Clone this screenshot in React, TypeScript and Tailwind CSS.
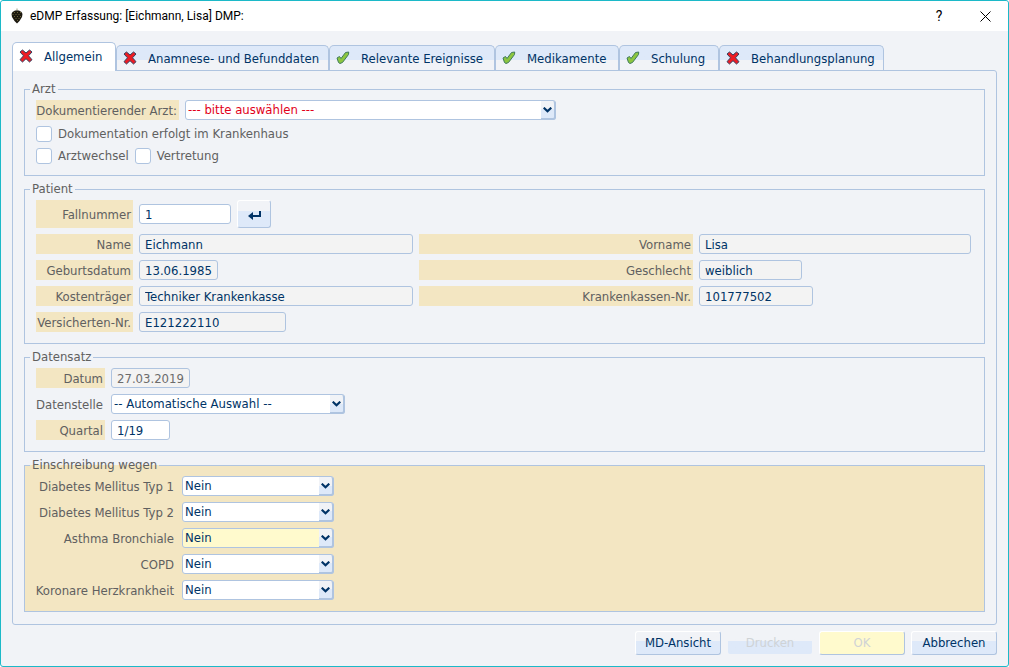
import { useState } from 'react'
import type { ReactNode } from 'react'
import clsx from 'clsx'

interface Tab {
  id: string
  label: string
  complete: boolean
  width: string
}

const TABS: Tab[] = [
  { id: 'allgemein', label: 'Allgemein', complete: false, width: 'w-[104px]' },
  { id: 'anamnese', label: 'Anamnese- und Befunddaten', complete: false, width: 'w-[213px]' },
  { id: 'ereignisse', label: 'Relevante Ereignisse', complete: true, width: 'w-[166px]' },
  { id: 'medikamente', label: 'Medikamente', complete: true, width: 'w-[124px]' },
  { id: 'schulung', label: 'Schulung', complete: true, width: 'w-[100px]' },
  { id: 'planung', label: 'Behandlungsplanung', complete: false, width: 'w-[165px]' },
]

const DIAGNOSEN = [
  { id: 'dm1', label: 'Diabetes Mellitus Typ 1' },
  { id: 'dm2', label: 'Diabetes Mellitus Typ 2' },
  { id: 'asthma', label: 'Asthma Bronchiale', highlight: true },
  { id: 'copd', label: 'COPD' },
  { id: 'khk', label: 'Koronare Herzkrankheit' },
]

function AppIcon() {
  return (
    <svg width="12" height="16" viewBox="0 0 12 16" aria-hidden="true">
      <path d="M6 3V0.500" stroke="#9a9a7c" strokeWidth="1" />
      <path d="M1.500 4L4 2.500H8L10.500 4L11.500 6L11 9L8.500 13L6 15.500L3.500 13L1 9L0.500 6Z" fill="#1c1910" />
      <path d="M3 4.500h1M6 4.500h1M9 4.500h1M1.500 6.500h1M4.500 6.500h1M7.500 6.500h1M3 8.500h1M6 8.500h1M9 8.500h1M4.500 10.500h1M7.500 10.500h1M6 12.500h1" stroke="#6a6238" strokeWidth="1" />
    </svg>
  )
}

function CrossIcon() {
  return (
    <svg width="14" height="14" viewBox="0 0 14 14" aria-hidden="true">
      <path
        d="M1 3L3.500 1L7 4L10.500 1L13 3L9.500 6.800L13 10.700L10.500 13L7 9.700L3.500 13L1 10.700L4.500 6.800Z"
        fill="#ed1c24"
        stroke="#34405f"
        strokeWidth="1"
        strokeLinejoin="round"
      />
    </svg>
  )
}

function CheckIcon() {
  return (
    <svg width="14" height="14" viewBox="0 0 14 14" aria-hidden="true">
      <path
        d="M1 7L3.500 5.500L5 7.500L9.500 1.500L12.700 1L12.500 3.500L6.500 11.500L4 12.500L2.500 11.500Z"
        fill="#8cc63f"
        stroke="#3f7a5c"
        strokeWidth="1"
        strokeLinejoin="round"
      />
    </svg>
  )
}

function Group({ title, tinted, children }: { title: string; tinted?: boolean; children: ReactNode }) {
  return (
    <fieldset className={clsx('min-w-0 border border-[#afc4e0] pl-[11px] pr-[13px] pb-[11px]', tinted && 'bg-[#f3e6c2]')}>
      <legend className="-ml-[6px] px-[2px] h-4 leading-4">{title}</legend>
      <div className="pt-[3px] flex flex-col gap-1.5">{children}</div>
    </fieldset>
  )
}

function Label({ htmlFor, plain, className, children }: { htmlFor: string; plain?: boolean; className?: string; children: ReactNode }) {
  return (
    <label
      htmlFor={htmlFor}
      className={clsx('flex items-center justify-end pt-[2px] pr-[2px] whitespace-nowrap', !plain && 'bg-[#f3e6c2]', className)}
    >
      {children}
    </label>
  )
}

function TextField({ id, value, width, readOnly, disabled }: { id: string; value: string; width: string; readOnly?: boolean; disabled?: boolean }) {
  return (
    <input
      id={id}
      type="text"
      defaultValue={value}
      readOnly={readOnly}
      disabled={disabled}
      className={clsx(
        'h-5 self-center rounded-[3px] border border-[#afc4e0] px-[5px] outline-none',
        readOnly || disabled ? 'bg-[#f3f3f3]' : 'bg-white',
        disabled ? 'text-[#6c6c6c]' : 'text-[#003366]',
        width,
      )}
    />
  )
}

interface SelectProps {
  id: string
  options: string[]
  width: string
  tone?: 'error' | 'highlight'
}

function Select({ id, options, width, tone }: SelectProps) {
  return (
    <div className={clsx('relative h-5', width)}>
      <select
        id={id}
        className={clsx(
          'block h-5 w-full appearance-none rounded-[3px] border border-[#afc4e0] pl-[2px] pr-4 outline-none',
          tone === 'highlight' ? 'bg-[#fffacd]' : 'bg-white',
          tone === 'error' ? 'text-[#e2001a]' : 'text-[#003366]',
        )}
      >
        {options.map(o => (
          <option key={o}>{o}</option>
        ))}
      </select>
      <span className="pointer-events-none absolute top-px right-0 bottom-0 flex w-[15px] items-center justify-center rounded-r-[3px] border-r-2 border-b-2 border-[#afc4e0] bg-linear-to-b from-[#f1f3f7] from-50% to-[#dee9f9] to-50%">
        <svg width="9" height="6" viewBox="0 0 9 6" aria-hidden="true">
          <path d="M0.700 0.700L4.500 4.300L8.300 0.700" fill="none" stroke="#003366" strokeWidth="2.200" />
        </svg>
      </span>
    </div>
  )
}

function CheckBox({ id, label }: { id: string; label: string }) {
  return (
    <label htmlFor={id} className="flex h-4 items-center gap-1.5 whitespace-nowrap">
      <input
        id={id}
        type="checkbox"
        className="size-4 appearance-none rounded-[3px] border border-[#afc4e0] bg-white checked:bg-[#003366]"
      />
      {label}
    </label>
  )
}

function DialogButton({ children, variant }: { children: ReactNode; variant?: 'disabled' | 'confirm' }) {
  return (
    <button
      type="button"
      disabled={variant !== undefined}
      className={clsx(
        'h-6 w-[86px] rounded-[3px] border',
        variant === 'disabled' && 'border-transparent bg-clip-padding',
        variant !== 'disabled' && 'border-t-white border-l-white border-r-[#afc4e0] border-b-[#afc4e0]',
        variant === 'confirm' ? 'bg-[#fffacd]' : 'bg-linear-to-b from-[#f1f3f7] from-42% to-[#dee9f9] to-42%',
        variant ? 'text-[#cfd3d6]' : 'text-[#003366]',
      )}
    >
      {children}
    </button>
  )
}

export default function App() {
  const [active, setActive] = useState('allgemein')

  return (
    <div className="min-h-screen rounded-[3px] border border-[#1cb9c8] bg-[#f1f3f7] font-['DejaVu_Sans_Condensed','DejaVu_Sans',sans-serif] text-[13px] leading-4 text-[#606060]">
      <header className="flex h-[30px] items-center rounded-t-[3px] bg-white pl-2.5 font-['Roboto','Noto_Sans',sans-serif] text-xs text-black">
        <AppIcon />
        <h1 className="ml-[7px]">eDMP Erfassung: [Eichmann, Lisa] DMP:</h1>
        <button type="button" aria-label="Hilfe" className="ml-auto w-[46px] text-sm">
          ?
        </button>
        <button type="button" aria-label="Schließen" className="flex w-[46px] justify-center">
          <svg width="11" height="11" viewBox="0 0 11 11" aria-hidden="true">
            <path d="M0.500 0.500L10.500 10.500M10.500 0.500L0.500 10.500" stroke="#000" strokeWidth="1" />
          </svg>
        </button>
      </header>

      <main className="px-[11px] pt-[11px] pb-[11px]">
        <div role="tablist" className="flex h-7 items-end">
          {TABS.map(tab => (
            <button
              key={tab.id}
              type="button"
              role="tab"
              aria-selected={tab.id === active}
              onClick={() => setActive(tab.id)}
              className={clsx(
                'flex items-center rounded-t-[5px] border border-b-0 border-[#afc4e0] pl-[6px] whitespace-nowrap text-[#003366]',
                tab.id === active
                  ? 'z-10 -mb-px h-[29px] bg-white pb-[3px]'
                  : 'h-[25px] bg-linear-to-b from-[#dee9f9] from-60% to-[#f1f3f7] to-60%',
                tab.width,
              )}
            >
              {tab.complete ? <CheckIcon /> : <CrossIcon />}
              <span className="ml-[11px] pt-[2px]">{tab.label}</span>
            </button>
          ))}
        </div>

        <div role="tabpanel" className="flex flex-col gap-[5px] rounded-b-[3px] rounded-tr-[3px] border border-[#afc4e0] px-[11px] pt-2.5 pb-3">
          <Group title="Arzt">
            <div className="flex gap-1.5">
              <Label htmlFor="arzt" className="w-[143px]">Dokumentierender Arzt:</Label>
              <Select id="arzt" options={['--- bitte auswählen ---']} width="w-[371px]" tone="error" />
            </div>
            <CheckBox id="krankenhaus" label="Dokumentation erfolgt im Krankenhaus" />
            <div className="flex gap-1.5">
              <CheckBox id="arztwechsel" label="Arztwechsel" />
              <CheckBox id="vertretung" label="Vertretung" />
            </div>
          </Group>

          <Group title="Patient">
            <div className="grid grid-cols-[97px_137fr_137fr_136fr] gap-1.5">
              <Label htmlFor="fallnummer">Fallnummer</Label>
              <div className="col-span-3 flex items-center gap-1.5">
                <TextField id="fallnummer" value="1" width="w-[92px]" />
                <button
                  type="button"
                  aria-label="Übernehmen"
                  className="flex h-7 w-[34px] items-center justify-center rounded-[3px] border border-t-white border-r-[#afc4e0] border-b-[#afc4e0] border-l-white bg-linear-to-b from-[#f1f3f7] from-40% to-[#dee9f9] to-40%"
                >
                  <svg width="13" height="9" viewBox="0 0 13 9" className="mt-[3px]" aria-hidden="true">
                    <path d="M12 0V5H4" fill="none" stroke="#003366" strokeWidth="2" />
                    <path d="M0 5L5 1V9Z" fill="#003366" />
                  </svg>
                </button>
              </div>

              <Label htmlFor="name">Name</Label>
              <TextField id="name" value="Eichmann" width="w-full" readOnly />
              <Label htmlFor="vorname">Vorname</Label>
              <TextField id="vorname" value="Lisa" width="w-full" readOnly />

              <Label htmlFor="geburtsdatum">Geburtsdatum</Label>
              <TextField id="geburtsdatum" value="13.06.1985" width="w-[79px]" readOnly />
              <Label htmlFor="geschlecht">Geschlecht</Label>
              <TextField id="geschlecht" value="weiblich" width="w-[103px]" readOnly />

              <Label htmlFor="kostentraeger">Kostenträger</Label>
              <TextField id="kostentraeger" value="Techniker Krankenkasse" width="w-full" readOnly />
              <Label htmlFor="kassennr">Krankenkassen-Nr.</Label>
              <TextField id="kassennr" value="101777502" width="w-[114px]" readOnly />

              <Label htmlFor="versichertennr">Versicherten-Nr.</Label>
              <TextField id="versichertennr" value="E121222110" width="w-[147px]" readOnly />
            </div>
          </Group>

          <Group title="Datensatz">
            <div className="grid grid-cols-[69px_1fr] gap-1.5">
              <Label htmlFor="datum">Datum</Label>
              <TextField id="datum" value="27.03.2019" width="w-[79px]" disabled />
              <Label htmlFor="datenstelle" plain>Datenstelle</Label>
              <Select id="datenstelle" options={['-- Automatische Auswahl --']} width="w-[234px]" />
              <Label htmlFor="quartal">Quartal</Label>
              <TextField id="quartal" value="1/19" width="w-[59px]" />
            </div>
          </Group>

          <Group title="Einschreibung wegen" tinted>
            <div className="grid grid-cols-[140px_1fr] gap-1.5">
              {DIAGNOSEN.map(d => (
                <div key={d.id} className="contents">
                  <Label htmlFor={d.id} plain>{d.label}</Label>
                  <Select id={d.id} options={['Nein', 'Ja']} width="w-[152px]" tone={d.highlight ? 'highlight' : undefined} />
                </div>
              ))}
            </div>
          </Group>
        </div>

        <footer className="mt-1.5 flex justify-end gap-1.5">
          <DialogButton>MD-Ansicht</DialogButton>
          <DialogButton variant="disabled">Drucken</DialogButton>
          <DialogButton variant="confirm">OK</DialogButton>
          <DialogButton>Abbrechen</DialogButton>
        </footer>
      </main>
    </div>
  )
}
